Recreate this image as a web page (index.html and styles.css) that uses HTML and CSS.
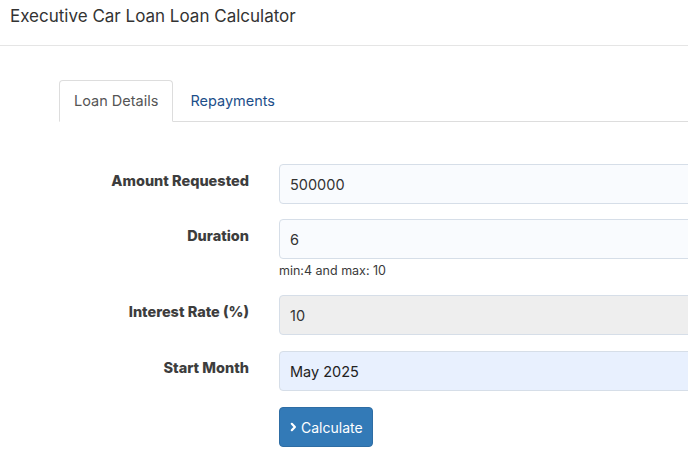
FILE: index.html
```html
<!DOCTYPE html>
<html lang="en">
<head>
    <meta charset="UTF-8">
    <title>Executive Car Loan Loan Calculator</title>
    <link rel="stylesheet" href="styles.css">
</head>
<body>
    <div class="page-header">
        <h1>Executive Car Loan Loan Calculator</h1>
    </div>

    <div class="content">
        <ul class="tabs">
            <li class="tab active">Loan Details</li>
            <li class="tab">Repayments</li>
        </ul>

        <form class="loan-form">
            <div class="form-row">
                <label>Amount Requested</label>
                <div class="field">
                    <input class="input" type="text" value="500000">
                </div>
            </div>
            <div class="form-row">
                <label>Duration</label>
                <div class="field">
                    <input class="input" type="text" value="6">
                    <p class="help">min:4 and max: 10</p>
                </div>
            </div>
            <div class="form-row">
                <label>Interest Rate (%)</label>
                <div class="field">
                    <input class="input disabled" type="text" value="10" disabled>
                </div>
            </div>
            <div class="form-row">
                <label>Start Month</label>
                <div class="field">
                    <input class="input filled" type="text" value="May 2025">
                </div>
            </div>
            <div class="form-row">
                <span></span>
                <div class="field">
                    <button type="button" class="btn-primary">
                        <svg width="7" height="10" viewBox="0 0 7 10"><path d="M1.8 1.8 L4.9 5 L1.8 8.2" fill="none" stroke="#fff" stroke-width="2.2" stroke-linecap="round" stroke-linejoin="round"/></svg>
                        Calculate
                    </button>
                </div>
            </div>
        </form>
    </div>
</body>
</html>
```

FILE: styles.css
```css
body {
    margin: 0;
    font-family: Inter, 'Open Sans', sans-serif;
    color: #333;
    background: #fff;
    overflow: hidden;
}
.page-header {
    height: 45px;
    border-bottom: 1px solid #e5e5e5;
    padding: 0 10px;
}
.page-header h1 {
    margin: 0;
    padding-top: 5px;
    font-size: 17px;
    line-height: 22px;
    font-weight: 400;
    color: #333;
}
.content {
    padding: 34px 0 0 59px;
}
.tabs {
    list-style: none;
    margin: 0;
    padding: 0;
    display: flex;
    border-bottom: 1px solid #ddd;
    width: 700px;
}
.tab {
    height: 40px;
    line-height: 40px;
    padding: 0 14px;
    margin-bottom: -1px;
    font-size: 14.5px;
    color: #1d4f8a;
    border: 1px solid transparent;
    border-radius: 4px 4px 0 0;
    margin-right: 2px;
}
.tab.active {
    color: #555;
    border-color: #ddd;
    border-bottom-color: #fff;
    background: #fff;
}
.loan-form {
    margin-top: 42px;
}
.form-row {
    display: grid;
    grid-template-columns: 190px 520px;
    column-gap: 30px;
    margin-bottom: 16px;
}
.form-row:first-child {
    margin-bottom: 15px;
}
.form-row label {
    text-align: right;
    font-weight: 800;
    font-size: 14.5px;
    line-height: 20px;
    padding-top: 7px;
    color: #3d3d3d;
}
.input {
    display: block;
    box-sizing: border-box;
    width: 100%;
    height: 40px;
    padding: 0 10px;
    font-family: inherit;
    font-size: 14.5px;
    color: #333;
    background: #f9fbfe;
    border: 1px solid #d6dee8;
    border-radius: 4px;
}
.input.disabled {
    background: #eeeeee;
    color: #333;
}
.input.filled {
    background: #e8f0fe;
    color: #222;
}
.help {
    margin: 4px 0 0;
    font-size: 12.5px;
    line-height: 16px;
    color: #3a3a3a;
}
.btn-primary {
    display: inline-flex;
    align-items: center;
    gap: 4px;
    height: 40px;
    padding: 0 9px 0 10px;
    font-family: inherit;
    font-size: 14px;
    color: #fff;
    background: #337ab7;
    border: 1px solid #2e6da4;
    border-radius: 4px;
}
```
